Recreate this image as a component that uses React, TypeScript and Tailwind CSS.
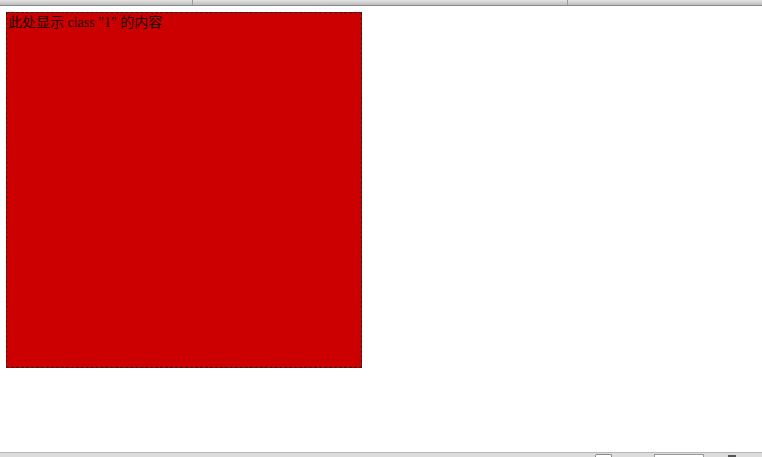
export default function App() {
  return (
    <div className="flex flex-col h-[457px] w-[762px] bg-white overflow-hidden">
      <div className="flex h-[6px] bg-gradient-to-b from-[#e4e4e4] to-[#bdbdbd] border-b border-[#8a8a8a]">
        <div className="w-[193px] border-r border-[#9a9a9a]" />
        <div className="w-[375px] border-r border-[#9a9a9a]" />
        <div className="flex-1" />
      </div>
      <div className="pl-[6px] pt-[6px] flex-1">
        <div
          className="w-[356px] h-[356px] bg-[#cc0000] border border-dashed border-[#222] text-[#1a0000] text-[14px] leading-[18px] pl-[1px] pt-[1px]"
          style={{ fontFamily: '"Liberation Serif", "Noto Sans CJK SC", serif' }}
        >
          此处显示 class "1" 的内容
        </div>
      </div>
      <div className="flex items-end h-[5px] bg-[#dcdcdc] border-t border-[#b8b8b8]">
        <div className="ml-[595px] w-[17px] h-[3px] border border-b-0 border-[#8a8a8a] rounded-t-[2px] bg-white" />
        <div className="ml-[42px] w-[50px] h-[3px] border border-b-0 border-[#9a9a9a] bg-white" />
        <div className="ml-[24px] w-[8px] h-[2px] bg-[#555]" />
      </div>
    </div>
  );
}
